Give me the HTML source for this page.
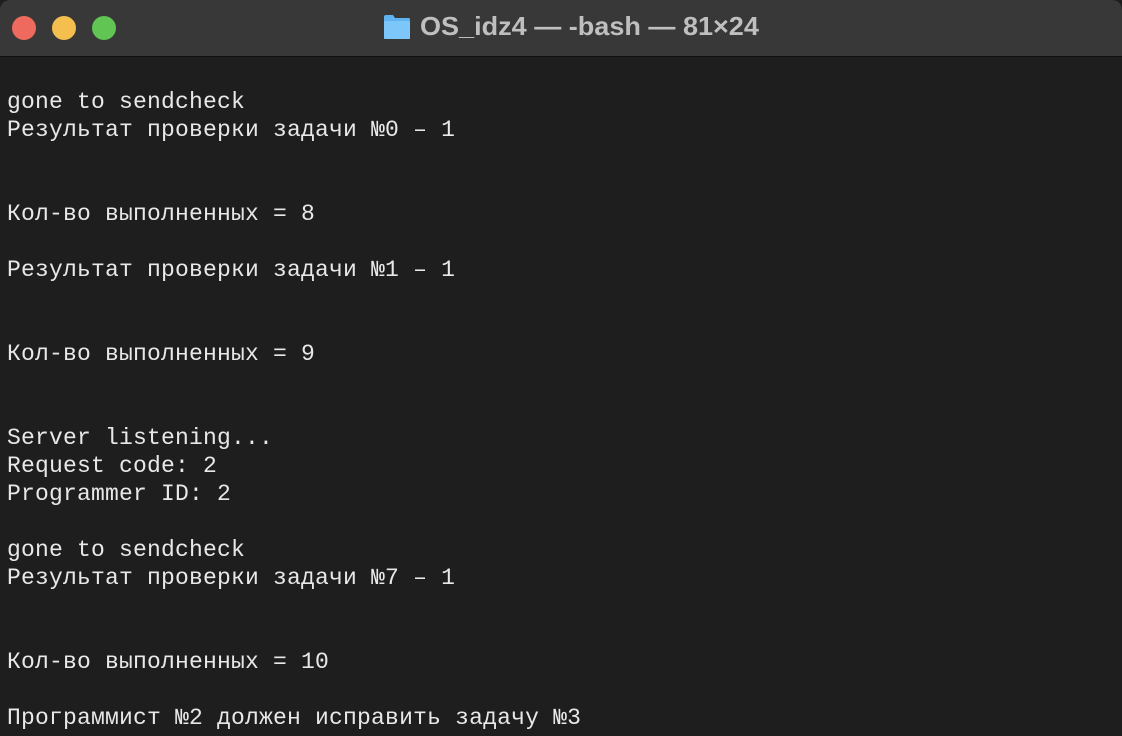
<!DOCTYPE html>
<html><head><meta charset="utf-8"><style>
html,body{margin:0;padding:0;width:1122px;height:736px;overflow:hidden;background:#1e1e1e}
.bar{position:absolute;left:0;top:0;width:1122px;height:56px;background:#383838;border-bottom:1px solid #111;border-radius:10px 10px 0 0}
.c{position:absolute;top:16px;width:24px;height:24px;border-radius:50%}
.title{position:absolute;left:420px;top:11px;font:bold 26px "Liberation Sans",sans-serif;color:#bfbfbf;white-space:nowrap;transform:scaleX(1.04);transform-origin:left}
.term{position:absolute;left:7px;top:88px;font:23px/28px "Liberation Mono","DejaVu Sans Mono",monospace;letter-spacing:0.2px;color:#e8e8e8;white-space:pre;margin:0}
</style></head><body>
<div class="bar">
<div class="c" style="left:12px;background:#ee6a5f"></div>
<div class="c" style="left:52px;background:#f5bf4f"></div>
<div class="c" style="left:92px;background:#61c554"></div>
<svg style="position:absolute;left:383px;top:14px" width="28" height="26" viewBox="0 0 28 26"><path d="M1 3 Q1 1 3 1 H10 L12 4 H26 Q27 4 27 6 V24 Q27 25 26 25 H2 Q1 25 1 24 Z" fill="#5fb3f0"/><rect x="1" y="7" width="26" height="18" rx="1" fill="#7cc6fa"/></svg>
<div class="title">OS_idz4 — -bash — 81×24</div>
</div>
<pre class="term">gone to sendcheck
Результат проверки задачи №0 – 1


Кол-во выполненных = 8

Результат проверки задачи №1 – 1


Кол-во выполненных = 9


Server listening...
Request code: 2
Programmer ID: 2

gone to sendcheck
Результат проверки задачи №7 – 1


Кол-во выполненных = 10

Программист №2 должен исправить задачу №3</pre>
</body></html>
